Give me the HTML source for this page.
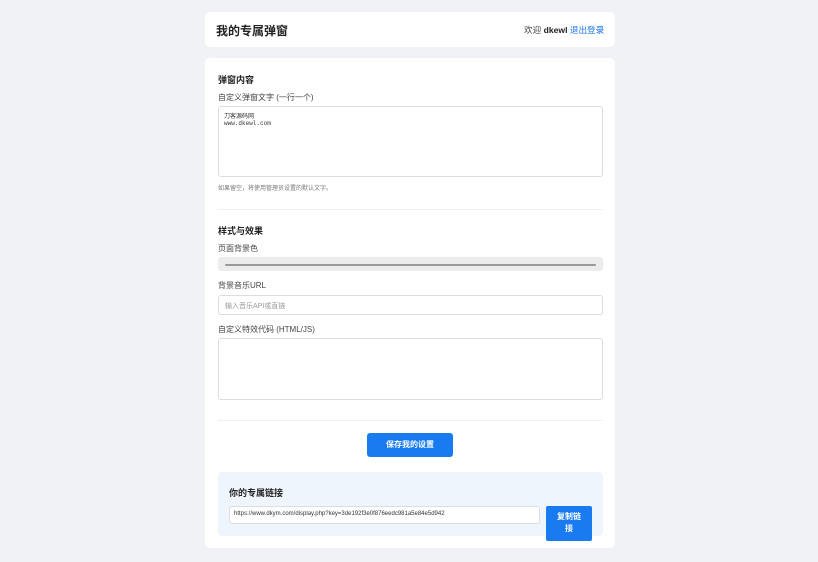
<!DOCTYPE html>
<html><head><meta charset="utf-8"><style>
*{box-sizing:border-box;margin:0;padding:0}
body{width:818px;height:562px;background:#f0f2f5;font-family:"Liberation Sans","Noto Sans CJK SC",sans-serif;color:#333;position:relative;overflow:hidden}
.abs{position:absolute}
.card{background:#fff;border-radius:5px}
.lbl{font-size:8px;color:#444}
.h{font-size:9px;font-weight:bold;color:#222}
.ta{border:1px solid #ddd;border-radius:3px;background:#fff}
</style></head><body>
<div class="abs card" style="left:205px;top:12px;width:410px;height:35px"></div>
<div class="abs" style="left:216px;top:22px;font-size:12px;font-weight:bold;color:#222">我的专属弹窗</div>
<div class="abs" style="left:524px;top:24px;font-size:8.6px;color:#444;white-space:nowrap">欢迎 <b style="color:#222">dkewl</b> <span style="color:#1a73e8">退出登录</span></div>
<div class="abs card" style="left:205px;top:58px;width:410px;height:490px"></div>
<div class="abs h" style="left:218px;top:73px">弹窗内容</div>
<div class="abs lbl" style="left:218px;top:92px">自定义弹窗文字 (一行一个)</div>
<div class="abs ta" style="left:218px;top:106px;width:385px;height:71px"></div>
<div class="abs" style="left:224px;top:113px;font-size:6px;line-height:7px;color:#333;font-family:'Liberation Mono','Noto Sans CJK SC',monospace">刀客源码网<br>www.dkewl.com</div>
<div class="abs" style="left:218px;top:183px;font-size:6px;color:#777">如果留空，将使用管理员设置的默认文字。</div>
<div class="abs" style="left:218px;top:209px;width:385px;height:1px;background:#f0f0f0"></div>
<div class="abs h" style="left:218px;top:224px">样式与效果</div>
<div class="abs lbl" style="left:218px;top:243px">页面背景色</div>
<div class="abs" style="left:218px;top:257px;width:385px;height:14px;background:#ececec;border-radius:3px"></div>
<div class="abs" style="left:225px;top:264px;width:371px;height:2px;background:#999;border-radius:1px"></div>
<div class="abs lbl" style="left:218px;top:280px">背景音乐URL</div>
<div class="abs ta" style="left:218px;top:295px;width:385px;height:20px"></div>
<div class="abs" style="left:225px;top:301px;font-size:7px;color:#999">输入音乐API或直链</div>
<div class="abs lbl" style="left:218px;top:324px">自定义特效代码 (HTML/JS)</div>
<div class="abs ta" style="left:218px;top:338px;width:385px;height:62px"></div>
<div class="abs" style="left:218px;top:420px;width:385px;height:1px;background:#f0f0f0"></div>
<div class="abs" style="left:367px;top:433px;width:86px;height:24px;background:#1a7bf0;border-radius:3px;color:#fff;font-size:8px;font-weight:bold;text-align:center;line-height:24px">保存我的设置</div>
<div class="abs" style="left:218px;top:472px;width:385px;height:64px;background:#eef5fd;border-radius:4px"></div>
<div class="abs h" style="left:229px;top:486px">你的专属链接</div>
<div class="abs ta" style="left:229px;top:506px;width:311px;height:18px"></div>
<div class="abs" style="left:234px;top:511px;font-size:6px;color:#333">https://www.dkym.com/display.php?key=3de192f3e0f876eedc981a5e84e5d942</div>
<div class="abs" style="left:546px;top:506px;width:46px;height:35px;background:#1a7bf0;border-radius:2px;color:#fff;font-size:8px;font-weight:bold;text-align:center;line-height:12px;padding-top:5px">复制链<br>接</div>
</body></html>
